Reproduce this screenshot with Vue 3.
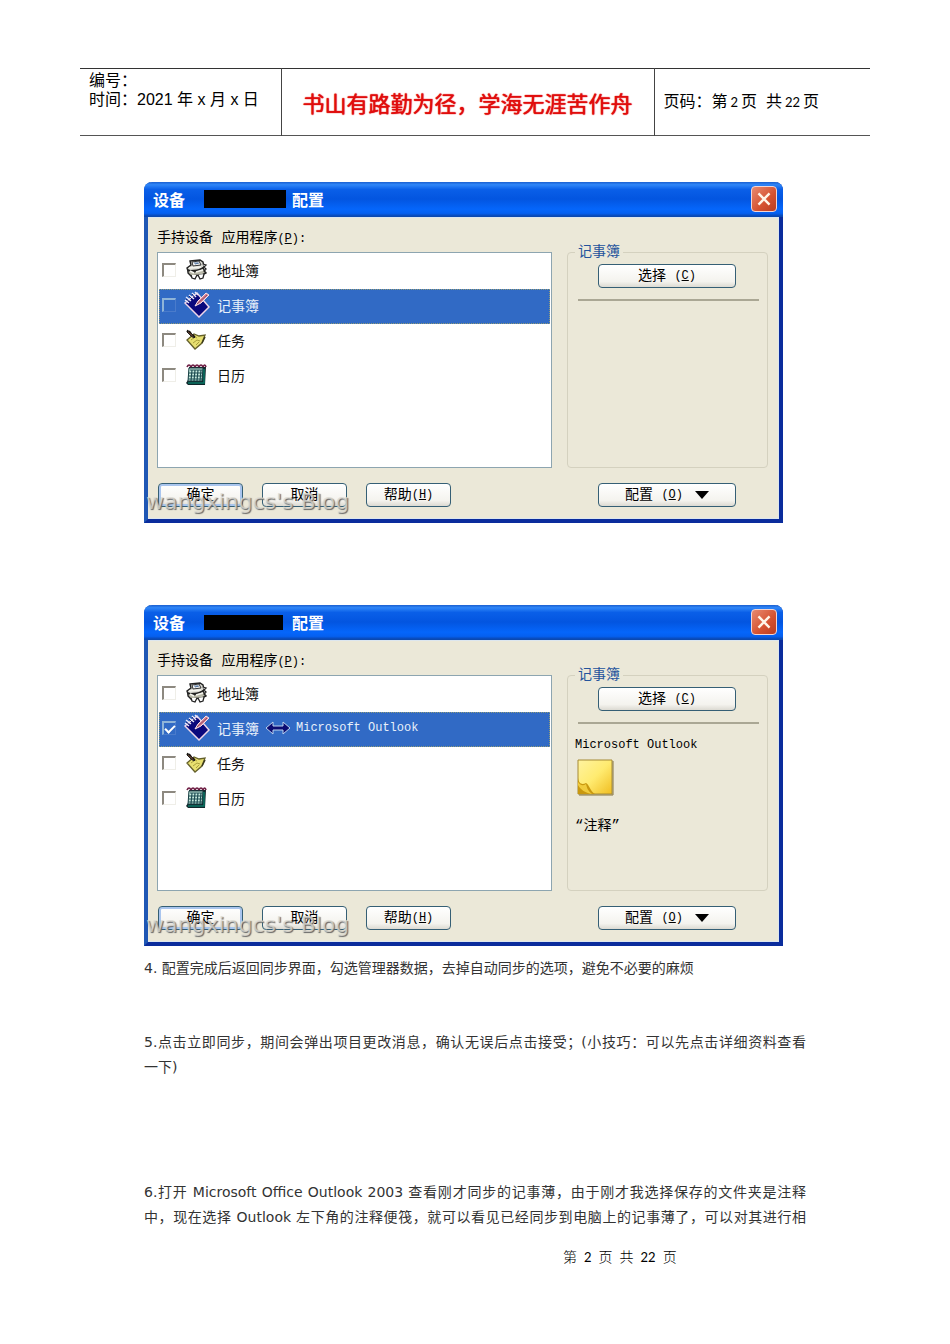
<script setup>
const apps = [
  { id: 'address', name: '地址簿' },
  { id: 'memo', name: '记事簿' },
  { id: 'task', name: '任务' },
  { id: 'calendar', name: '日历' }
]
const dialogs = [
  { id: 'before', synced: false },
  { id: 'after', synced: true }
]
</script>

<template>
  <div class="page">
    <table class="head">
      <tbody>
        <tr>
          <td class="meta">编号：<br />时间：2021 年 x 月 x 日</td>
          <td class="motto">书山有路勤为径，学海无涯苦作舟</td>
          <td class="number">页码：第<span class="num">2</span>页&nbsp; 共<span class="num">22</span>页</td>
        </tr>
      </tbody>
    </table>

    <main class="content">
      <section v-for="d in dialogs" :key="d.id" class="dialog">
        <header class="titlebar">
          <span>设备</span>
          <span class="redacted" :class="{ short: d.synced }"></span>
          <span class="title-end">配置</span>
          <button class="close" type="button" aria-label="关闭">
            <svg viewBox="0 0 26 26" width="26" height="26">
              <path d="M7 7L19 19M19 7L7 19" stroke="#fff5e8" stroke-width="2.600" />
            </svg>
          </button>
        </header>
        <div class="body">
          <p class="caption">手持设备 应用程序<span class="key">(<u>P</u>):</span></p>
          <div class="panes">
            <ul class="list">
              <li v-for="a in apps" :key="a.id">
                <label class="row" :class="{ selected: a.id === 'memo' }">
                  <input type="checkbox" :checked="d.synced && a.id === 'memo'" />
                  <svg v-if="a.id === 'address'" class="icon" viewBox="0 0 26 28">
                    <path d="M6 5l10-1 3 2 1 5-4 3-12 1-1-3 4-3z" fill="#d9d9d2" stroke="#222" stroke-width="1.400" />
                    <path d="M8 6l7-1 2 4-8 1z" fill="#f6f6f6" stroke="#333" />
                    <path d="M10 7h4M11 8l4-1" stroke="#5577a0" />
                    <path d="M4 14l6 2 9-4 3 5-4 2-11 1-3-3z" fill="#b9b9a9" stroke="#222" stroke-width="1.400" />
                    <path d="M6 15l4 2M12 16l7-2M5 12l12-1" stroke="#f4f4ee" stroke-width="1.500" />
                    <path d="M7 19l1 3 3 1 2-4M14 19l2 4 3-1 1-4M19 8l3 1-2 2 2 2-2 2 2 2" fill="#fff" stroke="#222" stroke-width="1.300" />
                  </svg>
                  <svg v-else-if="a.id === 'memo'" class="icon" viewBox="0 0 26 28">
                    <path d="M1 12L13 2l12 14-10 10z" fill="#0a087c" stroke="#eed5e8" stroke-width="1.500" />
                    <path d="M1 9l4 3M2 6l5 4M5 4l5 4M8 2l4 4M11 1l3 3" stroke="#e9e9fa" stroke-width="1.500" />
                    <path d="M2 8l4 3M5 5l3 3M8 3l3 4" stroke="#1d2578" />
                    <path d="M11 15l3-5 8-8 3 2-8 8z" fill="#d98799" stroke="#f6e1e6" />
                    <path d="M13 13l10-9" stroke="#8a4561" />
                  </svg>
                  <svg v-else-if="a.id === 'task'" class="icon" viewBox="0 0 26 28">
                    <path d="M3 14l7-6 5 2 6-1-3 8-7 6z" fill="#e7df70" stroke="#64602b" stroke-width="1.300" />
                    <path d="M7 14l4-3 2 1M9 17l4-3 3 1M12 19l3-3" fill="none" stroke="#aaa03d" />
                    <path d="M3 6l2-1 6 6-1 1-3-2z" fill="#5d3b2b" stroke="#222" />
                    <path d="M5 5l2 2M9 9l2 2M3 6l1-2" stroke="#15130e" stroke-width="1.500" />
                    <path d="M18 17l3-6" stroke="#3b391c" stroke-width="1.500" />
                  </svg>
                  <svg v-else class="icon" viewBox="0 0 26 28">
                    <path d="M5 6h17l-1 18H4l-2-2 2-3z" fill="#10272b" />
                    <path d="M5 7h14l-1 13H4z" fill="#c9ecdf" stroke="#163f43" />
                    <path d="M6 9h13M5 12h13M5 15h13M4 18h14M8 9L7 20M11 9l-1 11M14 9l-1 11M17 9l-1 11" stroke="#1c4c52" stroke-width="1.200" />
                    <path d="M3 6q2-4 4 0m0 0q2-4 4 0m0 0q2-4 4 0m0 0q2-4 4 0m0 0q2-4 3 0" fill="none" stroke="#6d1c43" stroke-width="1.600" />
                    <path d="M4 22h16V8" fill="none" stroke="#087565" stroke-width="1.500" />
                  </svg>
                  <span>{{ a.name }}</span>
                  <template v-if="d.synced && a.id === 'memo'">
                    <svg class="arrow" viewBox="0 0 26 16">
                      <path d="M1 8l7-6v4h10V2l7 6-7 6v-4H8v4z" fill="#0c0c72" stroke="#bcd3ef" />
                    </svg>
                    <span class="mono">Microsoft Outlook</span>
                  </template>
                </label>
              </li>
            </ul>
            <fieldset class="group">
              <legend>记事簿</legend>
              <button class="btn wide" type="button">选择&nbsp;<span class="key">(<u>C</u>)</span></button>
              <hr />
              <div v-if="d.synced" class="target">
                <p class="mono">Microsoft Outlook</p>
                <svg class="note" viewBox="0 0 37 37">
                  <defs>
                    <linearGradient id="paper" x1="0" y1="0" x2="1" y2="1">
                      <stop offset="0" stop-color="#fff3a0" />
                      <stop offset=".5" stop-color="#ffeb70" />
                      <stop offset="1" stop-color="#f0bd20" />
                    </linearGradient>
                  </defs>
                  <path d="M1 1h34v34H1z" fill="url(#paper)" stroke="#a58a35" />
                  <path d="M36 2v34H2" fill="none" stroke="#85733d" />
                  <path d="M1 19c1 6 4 7 8 5 3 1 4 8 9 11H1z" fill="#c9980f" />
                  <path d="M1 23c3 4 5 4 8 2 1 4 2 7 6 10C8 34 3 30 1 26z" fill="#f0cb3c" />
                </svg>
                <p>“注释”</p>
              </div>
            </fieldset>
          </div>
          <div class="actions">
            <button class="btn primary" type="button">确定</button>
            <button class="btn" type="button">取消</button>
            <button class="btn" type="button">帮助<span class="key">(<u>H</u>)</span></button>
            <button class="btn wide" type="button">配置&nbsp;<span class="key">(<u>O</u>)</span><svg class="caret" viewBox="0 0 14 8"><path d="M0 0h14L7 8z" /></svg></button>
          </div>
        </div>
        <span class="watermark">wangxingcs's Blog</span>
      </section>

      <p class="step">4. 配置完成后返回同步界面，勾选管理器数据，去掉自动同步的选项，避免不必要的麻烦</p>
      <p class="step">
        <span class="full">5.点击立即同步，期间会弹出项目更改消息，确认无误后点击接受；(小技巧：可以先点击详细资料查看</span>
        一下)
      </p>
      <p class="step last">
        <span class="full">6.打开 Microsoft Office Outlook 2003 查看刚才同步的记事薄，由于刚才我选择保存的文件夹是注释</span>
        <span class="full">中，现在选择 Outlook 左下角的注释便筏，就可以看见已经同步到电脑上的记事薄了，可以对其进行相</span>
      </p>
    </main>

    <footer class="foot">第&ensp;<span>2</span>&ensp;页&ensp;共&ensp;<span>22</span>&ensp;页</footer>
  </div>
</template>

<style>
body {
  margin: 0;
  background: #fff;
}
</style>

<style scoped>
* {
  box-sizing: border-box;
}
p,
ul {
  margin: 0;
  padding: 0;
  list-style: none;
}
.page {
  padding: 68px 80px;
  font-family: "Liberation Sans", "Noto Sans CJK SC", sans-serif;
  font-size: 16px;
  color: #000;
}
.head {
  width: 100%;
  border-collapse: collapse;
  border-top: 1px solid #333;
  border-bottom: 1px solid #555;
  table-layout: fixed;
}
.head td {
  height: 67px;
  padding: 2px 9px;
  line-height: 19px;
}
.head td + td {
  border-left: 1px solid #444;
}
.head .meta {
  width: 201px;
  vertical-align: top;
}
.head .motto {
  padding: 6px 0 2px;
  text-align: center;
  font-size: 22px;
  color: #e00d0d;
  text-shadow: 0 0 1px #e00d0d, 0 0 1px #f04040;
}
.head .number {
  width: 216px;
}
.num {
  margin: 0 3px;
  font-family: Lato, sans-serif;
  font-size: 13px;
}
.content {
  padding: 46px 64px 0;
}
.dialog {
  position: relative;
  max-width: 639px;
  margin-bottom: 82px;
  border: solid #0a2c9c;
  border-width: 0 4px 4px;
  border-left-color: #1f57b4;
  border-radius: 8px 8px 0 0;
  background: #ebe8d8;
  font-family: "Liberation Mono", "Noto Sans CJK SC", monospace;
  font-size: 14px;
}
.dialog:nth-of-type(2) {
  margin-bottom: 10px;
}
.titlebar {
  display: flex;
  align-items: center;
  height: 35px;
  margin: 0 -4px;
  padding: 0 6px 0 9px;
  border-radius: 8px 8px 0 0;
  border-bottom: 1px solid #0b49b0;
  background: linear-gradient(#1a5fd0, #2f86f8 8%, #0a5fe8 22%, #0355e0 50%, #0566fb 80%, #0560f0 92%, #0a48b4);
  font-size: 16px;
  font-weight: bold;
  color: #fff;
}
.redacted {
  width: 82px;
  height: 18px;
  margin: 0 6px 0 19px;
  background: #000;
}
.redacted.short {
  width: 79px;
  height: 15px;
  margin-right: 9px;
}
.close {
  width: 26px;
  height: 26px;
  margin-left: auto;
  padding: 0;
  border: 1px solid #f3d5d4;
  border-radius: 4px;
  background: linear-gradient(135deg, #e88a70, #d5512f 60%, #b93d22);
}
.close svg {
  display: block;
  width: 24px;
  height: 24px;
}
.body {
  padding: 10px 10px 11px 9px;
  border: solid #dce6ef;
  border-width: 1px 1px 1px 0;
}
.caption {
  height: 24px;
  line-height: 20px;
}
.key {
  font-size: 12px;
}
.mono {
  font-size: 12px;
}
.panes {
  display: flex;
  gap: 15px;
}
.list {
  flex: 1;
  height: 216px;
  padding: 1px;
  border: 1px solid #8da5b0;
  background: #fff;
}
.row {
  display: flex;
  align-items: center;
  height: 35px;
  padding: 0 0 4px 3px;
  color: #111;
}
.row.selected {
  background: #316ac5;
  color: #e8f0fa;
  outline: 1px dotted #8f9b78;
  outline-offset: -1px;
}
.row input {
  display: grid;
  place-items: center;
  appearance: none;
  width: 14px;
  height: 14px;
  margin: 0 8px 0 0;
  border: solid #8d8980;
  border-width: 2px 1px 1px 2px;
  border-right-color: #efeee8;
  border-bottom-color: #efeee8;
  background: #fff;
}
.row.selected input {
  border-color: #8fb4d8 #4a7bcb #4a7bcb #8fb4d8;
  background: #316ac5;
}
.row input:checked::after {
  content: "";
  width: 8px;
  height: 4px;
  border: solid #fff;
  border-width: 0 0 2px 2px;
  rotate: -45deg;
}
.icon {
  width: 26px;
  height: 28px;
  margin-right: 7px;
  fill: none;
}
.arrow {
  width: 26px;
  height: 16px;
  margin: 0 5px 0 6px;
}
.group {
  position: relative;
  width: 201px;
  min-width: 0;
  height: 216px;
  margin: 0;
  padding: 11px 8px 0 10px;
  border: 1px solid #d4d1bf;
  border-radius: 4px;
}
.group legend {
  position: absolute;
  top: -11px;
  left: 7px;
  padding: 0 3px;
  line-height: 20px;
  background: #ebe8d8;
  color: #24539c;
}
.btn {
  display: flex;
  align-items: center;
  justify-content: center;
  width: 85px;
  height: 24px;
  padding: 0;
  border: 1px solid #355f75;
  border-radius: 4px;
  background: linear-gradient(#fff, #f4f3ee 75%, #dcdad2);
  font: inherit;
  line-height: 20px;
  color: #000;
  white-space: pre;
}
.btn.primary {
  box-shadow: inset 0 0 0 2px #a9c5ee;
}
.btn.wide {
  width: 138px;
}
.group .btn {
  margin-left: 20px;
}
.group hr {
  height: 2px;
  margin: 11px 0 0;
  border: 0;
  background: #aaa794;
}
.target {
  margin-left: -3px;
  padding-top: 11px;
  line-height: 20px;
}
.note {
  display: block;
  width: 37px;
  height: 37px;
  margin: 4px 0 20px 2px;
}
.actions {
  display: flex;
  gap: 19px;
  padding: 15px 32px 0 1px;
}
.actions .wide {
  margin-left: auto;
}
.caret {
  width: 14px;
  height: 8px;
  margin-left: 12px;
}
.watermark {
  position: absolute;
  left: -2px;
  bottom: 3px;
  font-family: "DejaVu Sans", sans-serif;
  font-size: 22px;
  line-height: 28px;
  color: rgba(222, 220, 212, .75);
  text-shadow: 1px 1px 1px #666;
}
.step {
  margin-bottom: 49px;
  font-family: "DejaVu Sans", "Noto Sans CJK SC", sans-serif;
  font-size: 14px;
  line-height: 25px;
  color: #333;
}
.step + .step.last {
  margin: 100px 0 0;
}
.full {
  display: block;
  text-align: justify;
  text-align-last: justify;
}
.foot {
  padding: 17px 0 0 483px;
  font-family: Lato, "Noto Sans CJK SC", sans-serif;
  font-size: 14px;
  font-weight: 300;
  line-height: 20px;
}
.foot span {
  font-size: 13px;
  font-weight: 400;
}
</style>
